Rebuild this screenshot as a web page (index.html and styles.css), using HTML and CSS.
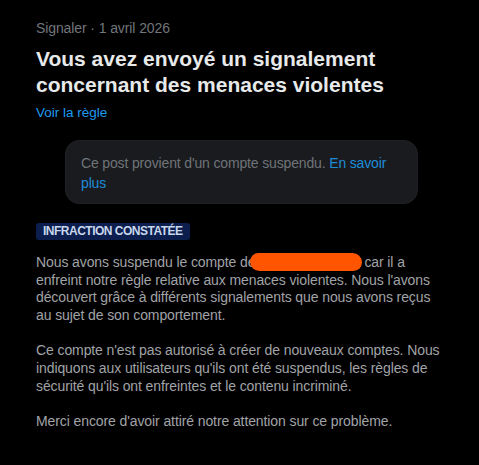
FILE: index.html
```html
<!DOCTYPE html>
<html lang="fr">
<head>
<meta charset="utf-8">
<link rel="stylesheet" href="styles.css">
</head>
<body>
<main class="page">
  <div class="meta">Signaler · 1 avril 2026</div>
  <h1 class="title">Vous avez envoyé un signalement concernant des menaces violentes</h1>
  <a class="rule-link" href="#">Voir la règle</a>
  <div class="notice">Ce post provient d'un compte suspendu. <a class="link" href="#">En savoir plus</a></div>
  <div class="badge">INFRACTION CONSTATÉE</div>
  <div class="body">
    <p>Nous avons suspendu le compte de<span class="redact"></span>car il a enfreint notre règle relative aux menaces violentes. Nous l'avons découvert grâce à différents signalements que nous avons reçus au sujet de son comportement.</p>
    <p>Ce compte n'est pas autorisé à créer de nouveaux comptes. Nous indiquons aux utilisateurs qu'ils ont été suspendus, les règles de sécurité qu'ils ont enfreintes et le contenu incriminé.</p>
    <p>Merci encore d'avoir attiré notre attention sur ce problème.</p>
  </div>
</main>
</body>
</html>
```

FILE: styles.css
```css
html, body {
  margin: 0;
  padding: 0;
  background: #000;
}
body {
  font-family: "Liberation Sans", Arial, sans-serif;
  color: #e7e9ea;
}
.page {
  padding: 19px 36px 0 36px;
  display: flex;
  flex-direction: column;
  align-items: flex-start;
}
.meta {
  font-size: 14px;
  line-height: 18px;
  letter-spacing: -0.1px;
  color: #71767b;
}
.title {
  margin: 9px 0 0 0;
  font-size: 21px;
  line-height: 26px;
  font-weight: 700;
  color: #e7e9ea;
  max-width: 390px;
}
.rule-link {
  margin-top: 6px;
  font-size: 13.5px;
  line-height: 18px;
  color: #1d9bf0;
  text-decoration: none;
}
.notice {
  margin: 18px 0 0 29px;
  width: 321px;
  padding: 12px 15px 10px 15px;
  background: #1a1b1f;
  border: 1px solid #202125;
  border-radius: 14px;
  font-size: 14px;
  line-height: 20px;
  letter-spacing: -0.15px;
  color: #6f7478;
}
.link {
  color: #1d8cd8;
  text-decoration: none;
}
.badge {
  margin-top: 19px;
  padding: 0 7px;
  height: 17px;
  line-height: 17px;
  background: #0b1e4e;
  color: #c9d6ec;
  font-size: 12px;
  font-weight: 700;
  letter-spacing: -0.5px;
  border-radius: 3px;
}
.body {
  margin-top: 13px;
  width: 406px;
  font-size: 14px;
  line-height: 17.67px;
  letter-spacing: -0.1px;
  color: #a0a3a7;
}
.body p {
  margin: 0 0 17.67px 0;
}
.redact {
  display: inline-block;
  width: 112px;
  height: 18px;
  margin-left: -5px;
  margin-right: 2px;
  vertical-align: -4px;
  background: #ff5500;
  border-radius: 9px 10px 9px 10px;
}
```
